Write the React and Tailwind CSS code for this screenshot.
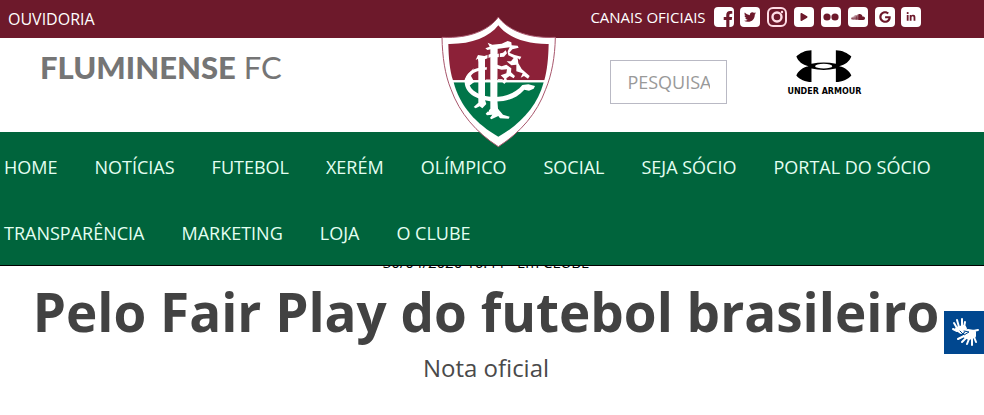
import React from "react";
import { FaFacebookF, FaTwitter, FaPlay, FaSoundcloud, FaGoogle, FaLinkedinIn } from "react-icons/fa";

const menu = [
  "HOME",
  "NOTÍCIAS",
  "FUTEBOL",
  "XERÉM",
  "OLÍMPICO",
  "SOCIAL",
  "SEJA SÓCIO",
  "PORTAL DO SÓCIO",
  "TRANSPARÊNCIA",
  "MARKETING",
  "LOJA",
  "O CLUBE",
];

const FlickrDots = () => (
  <svg viewBox="0 0 20 20" className="h-5 w-5" fill="currentColor">
    <circle cx="6" cy="10" r="3.6" />
    <circle cx="14" cy="10" r="3.6" />
  </svg>
);

const InstagramCamera = () => (
  <svg viewBox="0 0 20 20" className="h-5 w-5" fill="none" stroke="currentColor">
    <rect x="1" y="1" width="18" height="18" rx="5" strokeWidth="2" />
    <circle cx="10" cy="10" r="4.5" strokeWidth="2.4" />
    <circle cx="15" cy="5" r="1.2" fill="currentColor" stroke="none" />
  </svg>
);

const channels = [
  { name: "Facebook", icon: <FaFacebookF className="ml-2 mt-1 h-4 w-4 shrink-0" /> },
  { name: "Twitter", icon: <FaTwitter className="h-3 w-3" /> },
  { name: "Instagram", icon: <InstagramCamera />, outline: true },
  { name: "YouTube", icon: <FaPlay className="h-2 w-2.5" /> },
  { name: "Flickr", icon: <FlickrDots /> },
  { name: "SoundCloud", icon: <FaSoundcloud className="h-3.5 w-3.5" /> },
  { name: "Google", icon: <FaGoogle className="h-3 w-3" /> },
  { name: "LinkedIn", icon: <FaLinkedinIn className="h-2.5 w-2.5" /> },
];

const Crest = () => (
  <svg viewBox="33 45 348 399" className="h-[133px] w-[116px]" aria-hidden="true">
    <path
      d="M208 51 C182 88 125 116 39 112 C40 170 48 225 66 268 C92 340 142 398 208 440 C274 398 324 340 350 268 C368 225 378 170 379 112 C292 116 235 88 208 51Z"
      fill="#fff"
      stroke="#a8566c"
      strokeWidth="3"
    />
    <path d="M208 76 C180 112 128 133 58 132 C59 174 62 210 72 241 H346 C355 210 358 174 359 132 C290 133 236 112 208 76Z" fill="#8c2138" />
    <path d="M74 247 C92 318 143 374 208 410 C273 374 326 318 344 247Z" fill="#007549" />
    <path d="M70 244 H348" stroke="#fff" strokeWidth="6" />
    {/* monogram */}
    <g fill="#fff">
      <path d="M184 142 H206 L205 300 L207 326 L222 344 L242 350 L239 356 L213 355 L208 348 L187 358 L183 354 L190 344 L174 346 L170 341 L184 326Z" />
      <path d="M146 170 H172 L168 178 V300 L172 312 L160 325 L152 319 L140 325 L134 321 L148 308 V186Z" />
      <path d="M176 128 L190 134 L218 131 L236 123 L247 127 L248 136 L266 137 L269 143 L250 148 L238 162 L236 154 L242 142 L208 146 L190 147 L175 150 L169 145 L182 140Z" />
      <path d="M236 156 L257 165 L277 170 L272 179 L266 174 L268 190 L278 207 L302 228 L297 236 L285 228 L275 233 L281 220 L262 214 L262 194 L247 196 L233 184 L246 184 L254 174 L238 166Z" />
      <path d="M200 193 L218 199 L232 194 L247 205 L246 217 L258 228 L254 235 L242 228 L232 235 L234 242 L226 252 L220 246 L226 236 L215 226 L232 220 L234 208 L218 209 L200 205Z" />
      <path d="M140 180 L147 165 L166 168 L184 162 L204 162 L222 158 L230 151 L234 160 L225 170 L204 172 L188 170 L168 178 L150 175Z" />
      <path d="M280 255 L298 253 L318 258 L314 266 L300 272 L286 269 C258 300 224 306 192 304 C148 302 108 282 107 246 C108 218 136 200 174 202 L173 209 C140 210 120 222 119 246 C122 272 154 290 192 291 C230 292 260 279 280 255Z" />
      <path d="M104 244 L116 224 L134 205 L126 228 L136 246 L120 258Z" />
    </g>
    <g fill="none" strokeWidth="3">
      <path d="M177 152 V190 M211 151 V191" stroke="#8c2138" />
      <path d="M178 250 V286 M211 250 V284 M178 309 V335 M213 309 V331" stroke="#007549" />
      <path d="M128 244 H150 M170 240 H184 M207 239 H221" stroke="#fff" />
    </g>
  </svg>
);

const UnderArmour = () => (
  <a href="#under-armour" className="flex flex-col items-center text-black">
    <svg viewBox="290 150 170 100" className="h-[33px] w-14" aria-hidden="true">
      <path
        d="M337 151 V192 Q374 183 411 192 V151 C430 151 447 160 458 170 C452 185 440 195 421 199 C440 203 452 213 458 227 C447 239 430 247 411 247 V206 Q374 215 337 206 V247 C318 247 301 239 291 227 C297 213 309 203 328 199 C309 195 297 185 291 170 C301 160 318 151 337 151Z"
        fill="#000"
      />
      <ellipse cx="374" cy="199" rx="26" ry="7" fill="#fff" />
    </svg>
    <span className="mt-1 font-['DejaVu_Sans',sans-serif] text-[8px] font-bold leading-[10px]">UNDER ARMOUR</span>
  </a>
);

const Hands = () => (
  <svg viewBox="0 0 40 43" className="h-[43px] w-10" fill="none" stroke="#fff" strokeLinecap="round" strokeLinejoin="round" aria-hidden="true">
    <path d="M13 18 L17 21 L21 18 L20 16 L16 17Z" fill="#fff" strokeWidth="4" />
    <path d="M13 17 L10 12 M15 16 L13 9 M18 15 L18 8 M20 16 L21 11 M13 20 L9 18" strokeWidth="2" />
    <path d="M24 20 L30 21 L30 25 L25 27 L21 25Z" fill="#fff" strokeWidth="4" />
    <path d="M29 20 L34 19 M20 25 L14 28 M22 27 L18 31 M25 28 L23 33 M28 27 L28 34 M30 26 L32 31" strokeWidth="2" />
    <path d="M16 20 L20 24 L25 21 L20 20" stroke="#00478f" strokeWidth="1" />
  </svg>
);

const Header = () => (
  <header className="relative z-10 border-b border-black bg-white">
    <div className="flex h-[38px] items-center bg-[#6d192b] text-white">
      <div className="w-3/5 pl-2">
        <a href="#ouvidoria" className="text-base leading-5">OUVIDORIA</a>
      </div>
      <div className="flex w-2/5 items-center gap-2 pb-1">
        <span className="whitespace-nowrap text-[15px] leading-5">CANAIS OFICIAIS</span>
        <ul className="flex w-52 justify-between">
          {channels.map((channel) => (
            <li key={channel.name}>
              <a
                href={`#${channel.name.toLowerCase()}`}
                aria-label={channel.name}
                className={
                  channel.outline
                    ? "flex h-5 w-5 items-center justify-center text-[#ffdce5]"
                    : "flex h-5 w-5 items-center justify-center overflow-hidden rounded-sm bg-white text-[#6d192b]"
                }
              >
                {channel.icon}
              </a>
            </li>
          ))}
        </ul>
      </div>
    </div>

    <div className="flex h-[94px]">
      <div className="w-3/5 pl-10 pt-[11px]">
        <a href="#inicio" className="font-['Lato',sans-serif] text-[31px] leading-9 text-[#757575]">
          <span className="font-black">FLUMINENSE</span> <span>FC</span>
        </a>
      </div>
      <div className="flex w-2/5 items-start gap-[60px] pl-5">
        <input
          type="text"
          aria-label="Pesquisar"
          placeholder="PESQUISAR"
          className="mt-[22px] h-11 w-[117px] border border-[#b9b9c4] bg-white px-4 text-[18px] outline-none placeholder:text-[#999999]"
        />
        <div className="pt-3">
          <UnderArmour />
        </div>
      </div>
    </div>

    <nav className="bg-[#00643c] pt-px">
      <ul className="flex flex-wrap gap-x-[37px] pl-1">
        {menu.map((item) => (
          <li key={item}>
            <a href="#menu" className="block pb-[21px] pt-[23px] text-[18px] leading-[22px] text-[#e4fff2]">{item}</a>
          </li>
        ))}
      </ul>
    </nav>

    {/* Crest hangs over the three bars */}
    <a href="#inicio" aria-label="Fluminense FC" className="absolute left-1/2 top-[15px] ml-1.5 -translate-x-1/2">
      <Crest />
    </a>
  </header>
);

const App = () => {
  return (
    <div className="relative overflow-hidden bg-white font-['Open_Sans',sans-serif]">
      <Header />

      <main className="-mt-3.5 pr-3 text-center">
        <p className="text-[15px] leading-5 text-black">30/04/2020 16:44 - Em CLUBE</p>
        <h1 className="mt-1.5 text-[53px] font-bold leading-[68px] text-[#424242]">Pelo Fair Play do futebol brasileiro</h1>
        <p className="mt-1 text-2xl leading-9 text-[#4a4a4a]">Nota oficial</p>
      </main>

      <button type="button" aria-label="Tradução em Libras" className="fixed right-0 top-[311px] z-20 bg-[#00478f]">
        <Hands />
      </button>
    </div>
  );
};

export default App;
